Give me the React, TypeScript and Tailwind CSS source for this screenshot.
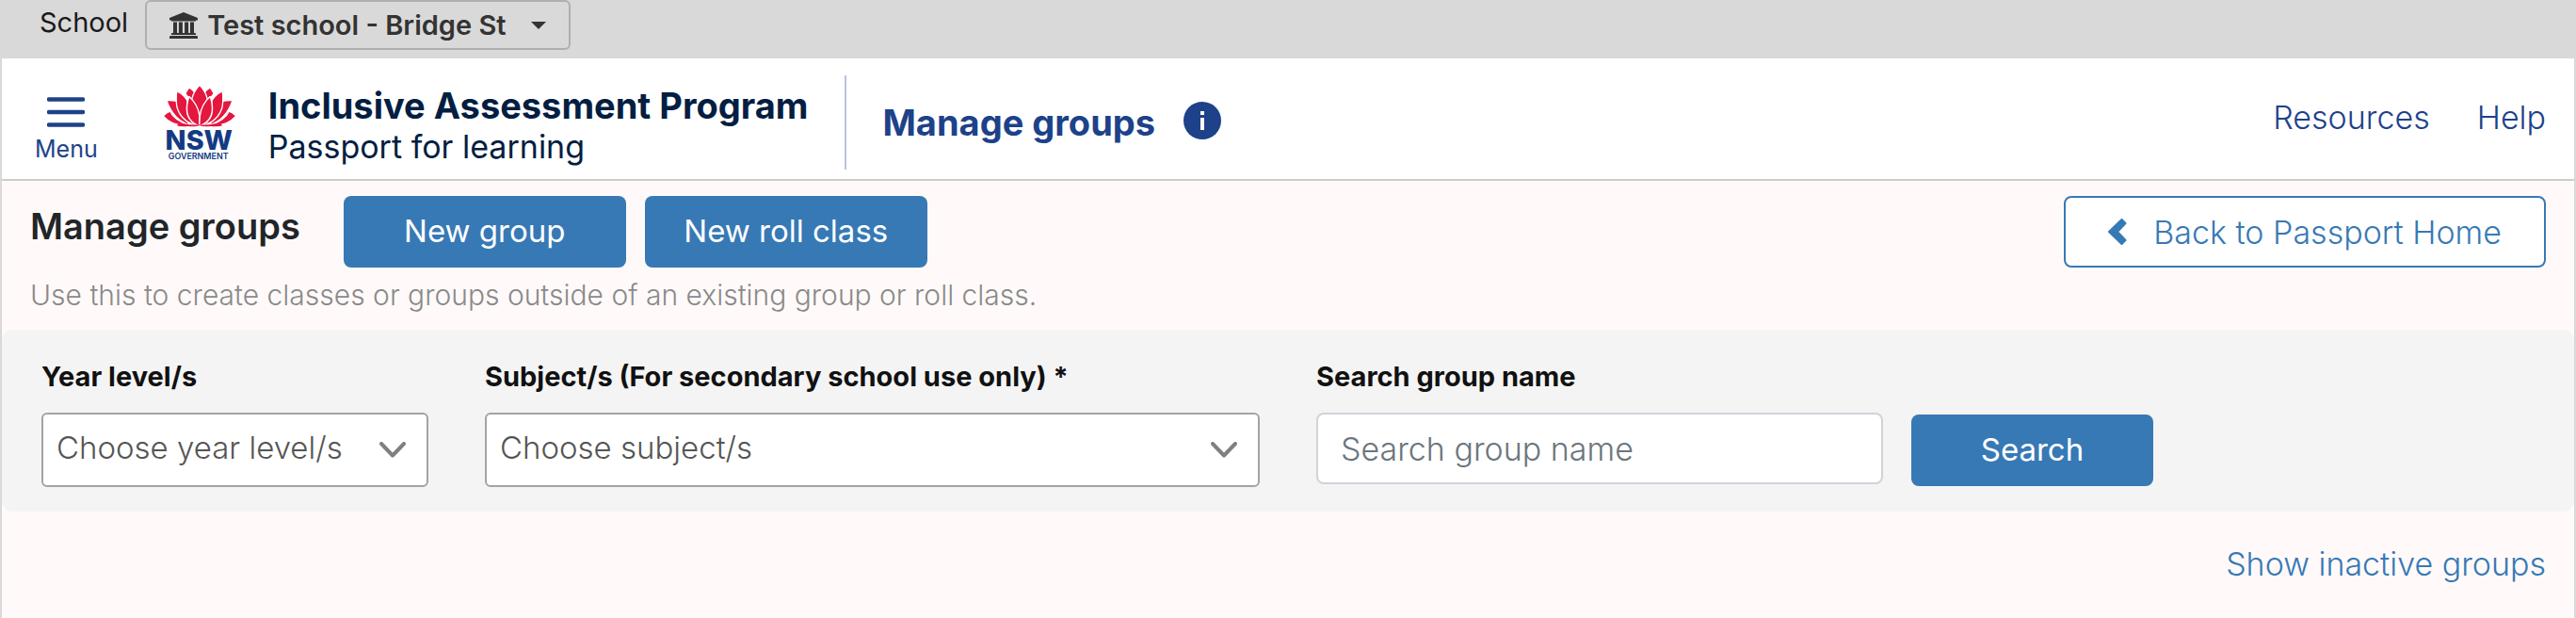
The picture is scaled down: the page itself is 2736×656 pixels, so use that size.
import React, { useId } from "react";

function BuildingIcon() {
  return (
    <svg viewBox="0 0 30 28" className="h-7 w-[30px] shrink-0" fill="currentColor" aria-hidden="true">
      <path d="M15 0 30 6v2.4h-2V9.600H2V8.400H0V6Z" />
      <path d="M4 10.500h4V22h1.900V10.500h4V22h2.200V10.500h4V22H22V10.500h4V22h1.200q.8 0 .8.8V24H2v-1.200q0-.8.8-.8H4Z" />
      <path d="M1.200 25h27.600q1.200 0 1.200 1.200V28H0v-1.800Q0 25 1.200 25Z" />
    </svg>
  );
}

function Petals() {
  return (
    <g>
      <path d="M152 63Q166 70 174 84L162 112 140 82Z" />
      <path d="M80 104Q98 103 116 107L154 184Q100 165 80 104Z" />
      <path d="M69 154Q80 143 91 139Q104 168 152 184Q98 188 69 154Z" />
      <path d="M113 74Q140 88 150 112L174 185Q126 170 113 125Q109 96 113 74Z" />
      <path d="M152 92Q186 122 187 158L184 187Q128 164 152 92Z" />
    </g>
  );
}

function NswLogo() {
  return (
    <svg viewBox="68 54 236 242" className="h-20 w-[78px] shrink-0" role="img" aria-label="NSW Government">
      <g fill="#e4173e" stroke="#ffffff" strokeWidth="4" strokeLinejoin="round">
        <Petals />
        <g transform="translate(372 0) scale(-1 1)">
          <Petals />
        </g>
        <path d="M186 55Q206 76 211 100Q203 128 186 156Q169 128 161 100Q166 76 186 55Z" />
        <path d="M152 92Q180 116 186 154L185 187Q128 164 152 92Z" />
        <path d="M220 92Q192 116 187 154L185 187Q244 164 220 92Z" />
      </g>
      <path
        d="M112 184Q122 176 136 179Q160 184 186 182Q212 184 236 179Q250 176 260 184Q250 190 222 187Q200 190 186 185Q172 190 150 187Q122 190 112 184Z"
        fill="#e4173e"
      />
      <text textAnchor="middle" fill="#143a84" className="font-['Inter',sans-serif] font-extrabold">
        <tspan x="184" y="262" fontSize="87">
          NSW
        </tspan>
        <tspan x="182" y="293" fontSize="27" fontWeight="600">
          GOVERNMENT
        </tspan>
      </text>
    </svg>
  );
}

function InfoIcon() {
  return (
    <svg viewBox="0 0 40 40" className="size-10" aria-hidden="true">
      <circle cx="20" cy="20" r="20" fill="#1d4289" />
      <path d="M18 10h4v4h-4zM18 17h4v13h-4z" fill="#ffffff" />
    </svg>
  );
}

function SelectField({ label, placeholder }: { label: string; placeholder: string }) {
  const id = useId();
  return (
    <div className="min-w-0">
      <label htmlFor={id} className="block truncate text-[29px] leading-10 font-bold text-[#111111]">
        {label}
      </label>
      <div className="mt-[18px] grid items-center">
        <select
          id={id}
          className="col-start-1 row-start-1 h-[79px] w-full appearance-none rounded-md border-2 border-[#a3a3a3] bg-white pr-16 pb-1 pl-3.5 text-[33px] font-light text-[#555555]"
        >
          <option>{placeholder}</option>
        </select>
        <svg
          viewBox="0 0 28 17"
          className="pointer-events-none col-start-1 row-start-1 mr-6 h-[17px] w-7 justify-self-end"
          fill="none"
          stroke="#808080"
          strokeWidth="4"
          strokeLinecap="round"
          strokeLinejoin="round"
          aria-hidden="true"
        >
          <path d="M2 2l12 12.500L26 2" />
        </svg>
      </div>
    </div>
  );
}

function PrimaryButton({ children, className = "" }: { children: React.ReactNode; className?: string }) {
  return (
    <button type="button" className={`h-[76px] shrink-0 rounded-lg bg-[#3779b5] text-[33px] text-white ${className}`}>
      {children}
    </button>
  );
}

export default function App() {
  return (
    <div className="flex min-h-screen flex-col bg-[#d9d9d9] font-['Inter',sans-serif]">
      <div className="flex h-[62px] items-start gap-[18px] pl-[42px]">
        <span className="text-[29px] leading-[48px] text-[#1a1a1a]">School</span>
        <button
          type="button"
          className="flex h-[53px] items-center rounded-md border-2 border-[#afafaf] pr-6 pl-6 text-[29px] font-semibold text-[#333333]"
        >
          <BuildingIcon />
          <span className="ml-2.5">Test school - Bridge St</span>
          <svg viewBox="0 0 16 8" className="ml-[26px] h-2 w-4" fill="currentColor" aria-hidden="true">
            <path d="M0 0h16L8 8Z" />
          </svg>
        </button>
      </div>

      <div className="flex flex-1 flex-col border-x-2 border-[#d9d9d9] bg-[#fffaf9]">
        <header className="flex h-[130px] items-center border-b-2 border-[#cccccc] bg-white pt-2 pr-[30px]">
          <button type="button" className="ml-[35px] flex flex-col items-center gap-2 pt-4 text-[25px] leading-[30px] text-[#1d4289]">
            <svg viewBox="0 0 40 32" className="h-8 w-10" stroke="currentColor" strokeWidth="4.500" strokeLinecap="round" aria-hidden="true">
              <path d="M2 2.500h36M2 16h36M2 29.500h36" />
            </svg>
            Menu
          </button>
          <div className="ml-[69px]">
            <NswLogo />
          </div>
          <div className="ml-[34px] pt-2 leading-[43px] whitespace-nowrap text-[#041e42]">
            <div className="text-[38px] font-bold">Inclusive Assessment Program</div>
            <div className="text-[34px]">Passport for learning</div>
          </div>
          <div className="ml-[39px] h-[100px] w-0.5 bg-[#b8c3dc]" />
          <h1 className="ml-[38px] text-[38px] font-bold whitespace-nowrap text-[#1d4289]">Manage groups</h1>
          <button type="button" aria-label="About managing groups" className="ml-[30px] pb-1">
            <InfoIcon />
          </button>
          <nav className="ml-auto flex gap-[50px] pb-3 text-[34px] font-light text-[#1d4289]">
            <a href="#resources">Resources</a>
            <a href="#help">Help</a>
          </nav>
        </header>

        <main>
          <div className="flex items-center pt-4 pr-[30px] pl-[30px]">
            <h2 className="pb-3 text-[38px] font-semibold whitespace-nowrap text-[#212529]">Manage groups</h2>
            <PrimaryButton className="ml-[46px] w-[300px]">New group</PrimaryButton>
            <PrimaryButton className="ml-5 w-[300px]">New roll class</PrimaryButton>
            <a
              href="#home"
              className="ml-auto flex h-[76px] shrink-0 items-center gap-7 rounded-lg border-2 border-[#3779b5] bg-white px-[45px] text-[34px] font-light text-[#3779b5]"
            >
              <svg viewBox="0 0 20 28" className="h-7 w-5" fill="currentColor" stroke="currentColor" strokeWidth="2" strokeLinejoin="round" aria-hidden="true">
                <path d="M14.500 1 18.500 5 10 14l8.500 9-4 4L1 14Z" />
              </svg>
              Back to Passport Home
            </a>
          </div>
          <p className="mt-2 pl-[30px] text-[30px] leading-[42px] font-light text-[#8a8a8a]">
            Use this to create classes or groups outside of an existing group or roll class.
          </p>

          <form
            className="mt-4 grid grid-cols-[411fr_823fr_889fr_345fr] gap-x-[60px] rounded-xl bg-[#f4f4f4] px-[42px] pt-[30px] pb-[26px]"
            onSubmit={(e) => e.preventDefault()}
          >
            <SelectField label="Year level/s" placeholder="Choose year level/s" />
            <SelectField label="Subject/s (For secondary school use only) *" placeholder="Choose subject/s" />
            <div className="min-w-0">
              <label htmlFor="group-name" className="block text-[29px] leading-10 font-bold text-[#111111]">
                Search group name
              </label>
              <div className="mt-[18px] flex items-start gap-[30px]">
                <input
                  id="group-name"
                  type="text"
                  placeholder="Search group name"
                  className="h-[76px] w-full min-w-0 rounded-lg border-2 border-[#ced4da] bg-white px-6 text-[34px] font-light placeholder:text-[#6c757d]"
                />
                <PrimaryButton className="mt-0.5 w-[257px]">Search</PrimaryButton>
              </div>
            </div>
          </form>

          <div className="mt-8 flex justify-end pr-[30px]">
            <a href="#inactive" className="text-[34px] leading-[48px] font-light text-[#3779b5]">
              Show inactive groups
            </a>
          </div>
        </main>
      </div>
    </div>
  );
}
